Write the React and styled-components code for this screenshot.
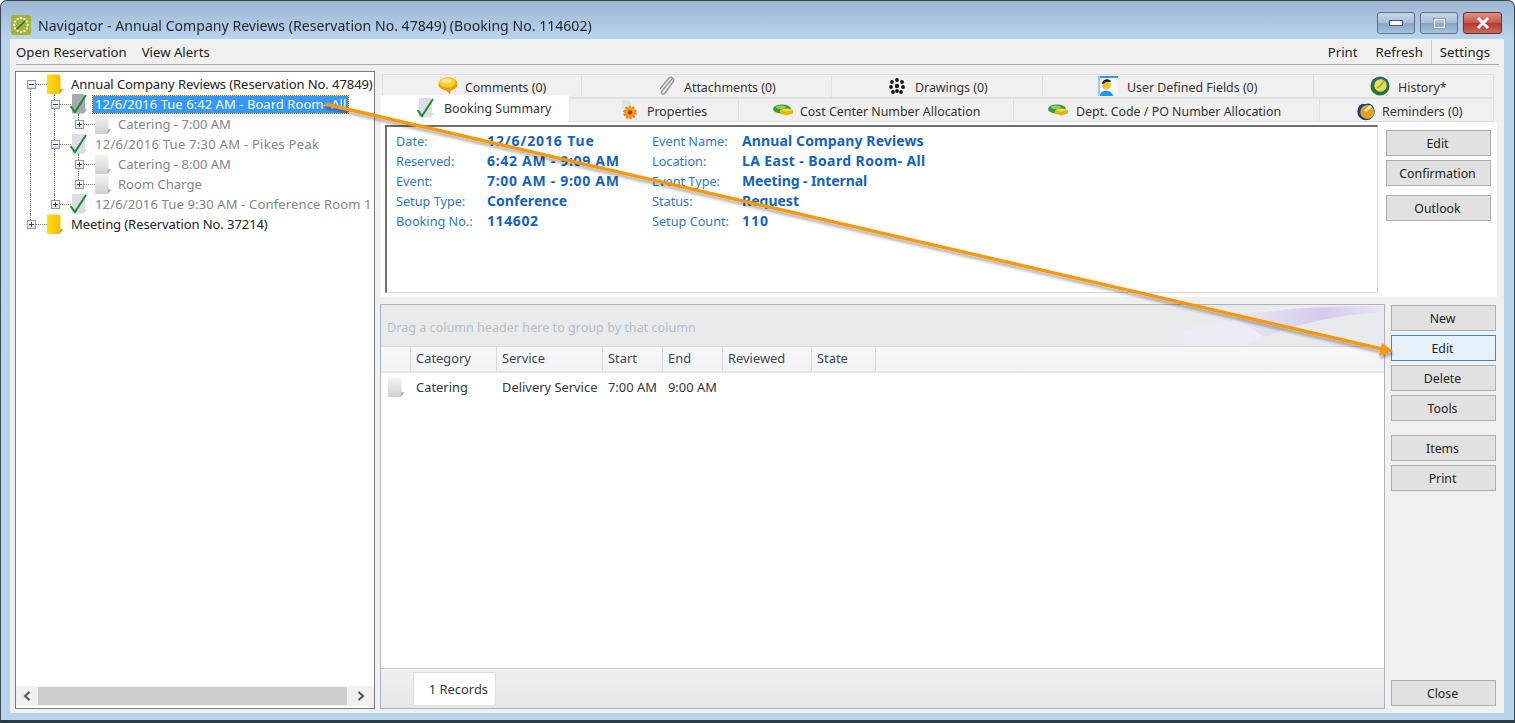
import React from "react";
import styled, { createGlobalStyle, css } from "styled-components";

const Global = createGlobalStyle`
  html, body { margin: 0; padding: 0; background: #fff; overflow: hidden; }
  * { box-sizing: border-box; }
  #root { width: 1515px; height: 723px; }
`;

const Window = styled.div`
  position: relative;
  width: 1515px;
  height: 723px;
  display: flex;
  flex-direction: column;
  padding: 0 10px 7px 9px;
  border-radius: 7px 7px 0 0;
  border: 1px solid #3a4650;
  border-bottom: 3px solid #2c3c44;
  background: linear-gradient(180deg, #9db7d2 0, #b9d4ee 38px, #b8d3ec 100%);
  font-family: "Noto Sans", "Open Sans", sans-serif;
  font-size: 13.2px;
  color: #222;
  filter: blur(0.4px);
`;
const TitleBar = styled.div`
  height: 38px;
  flex: none;
  display: flex;
  align-items: center;
  margin-left: 1px;
  padding-top: 10px;
`;
const TitleText = styled.span`
  margin-left: 7px;
  font-size: 14.1px;
  color: #1c2630;
  white-space: nowrap;
`;
const CaptionGroup = styled.div`
  margin-left: auto;
  margin-right: 2px;
  margin-top: -4px;
  display: flex;
  gap: 5px;
`;
const CaptionButton = styled.div`
  width: ${p => p.$w}px;
  height: 22px;
  display: flex;
  align-items: center;
  justify-content: center;
  border: 1px solid ${p => (p.$close ? "#7a2a22" : "#5f7285")};
  border-radius: 3px;
  background: ${p =>
    p.$close
      ? "linear-gradient(180deg,#dc9088 0,#c9584b 48%,#b23a2e 52%,#c96a5c 100%)"
      : "linear-gradient(180deg,#c5d6e8 0,#a8c0d9 48%,#8aa6c4 52%,#a8c2dc 100%)"};
`;
const Client = styled.div`
  flex: 1;
  min-height: 0;
  display: flex;
  flex-direction: column;
  background: #f0f0f0;
`;
const MenuBar = styled.div`
  height: 26px;
  flex: none;
  margin: 0 5px 0 6px;
  display: flex;
  align-items: center;
  border-bottom: 1px solid #a9a9a9;
`;
const MenuItem = styled.span`
  margin-left: ${p => p.$ml || 0}px;
  white-space: nowrap;
  color: #222;
`;
const MenuEnd = styled.span`
  margin-left: auto;
  white-space: nowrap;
  color: #222;
`;
const MenuDivider = styled.span`
  width: 1px;
  height: 24px;
  background: #c9c9c9;
  margin: 0 8px 0 8px;
`;
const Main = styled.div`
  flex: 1;
  min-height: 0;
  display: flex;
  gap: 5px;
  padding: 6px 5px 4px 5px;
`;
const TreePanel = styled.div`
  width: 360px;
  flex: none;
  display: flex;
  flex-direction: column;
  background: #fff;
  border: 1px solid #7b7b7b;
  padding-bottom: 2px;
`;
const TreeBody = styled.div`
  flex: 1;
  padding: 2px 0 0 3px;
  overflow: hidden;
  font-size: 13.05px;
`;
const TreeRow = styled.div`
  height: 20px;
  display: flex;
  align-items: center;
  white-space: nowrap;
`;
const lineV = css`
  &::before {
    content: "";
    position: absolute;
    left: 11px;
    border-left: 1px dotted #777;
    ${p => (p.$v === "full" ? "top:0;bottom:0;" : "")}
    ${p => (p.$v === "top" ? "top:0;height:10px;" : "")}
    ${p => (p.$v === "bottom" ? "top:10px;bottom:0;" : "")}
    ${p => (!p.$v ? "display:none;" : "")}
  }
`;
const GuideCell = styled.span`
  position: relative;
  width: 24px;
  height: 20px;
  flex: none;
  ${lineV}
`;
const ExpanderCell = styled(GuideCell)`
  display: flex;
  align-items: center;
  justify-content: center;
  &::after {
    content: "";
    position: absolute;
    left: 12px;
    top: 10px;
    width: 16px;
    border-top: 1px dotted #777;
  }
`;
const ExpanderBox = styled.span`
  position: relative;
  z-index: 1;
  width: 9px;
  height: 9px;
  border: 1px solid #8c99a8;
  background: linear-gradient(180deg, #fff, #dfe4ec);
  &::before {
    content: "";
    position: absolute;
    left: 1px;
    right: 1px;
    top: 3px;
    height: 1px;
    background: #27408b;
  }
  ${p =>
    p.$plus &&
    css`
      &::after {
        content: "";
        position: absolute;
        top: 1px;
        bottom: 1px;
        left: 3px;
        width: 1px;
        background: #27408b;
      }
    `}
`;
const IconCell = styled.span`
  position: relative;
  width: 24px;
  height: 20px;
  flex: none;
  display: flex;
  align-items: center;
  justify-content: center;
  z-index: 1;
  svg { position: relative; z-index: 1; }
  ${lineV}
`;
const TreeLabel = styled.span`
  margin-left: ${p => (p.$selected ? 2 : 0)}px;
  padding-left: ${p => (p.$selected ? 2 : p.$level === 2 ? 3 : 4)}px;
  padding-right: ${p => (p.$selected ? 2 : 0)}px;
  height: ${p => (p.$selected ? 17 : 20)}px;
  line-height: ${p => (p.$selected ? 16 : 20)}px;
  letter-spacing: ${p => p.$ls || 0}px;
  background: ${p => (p.$selected ? "#3399ff" : "transparent")};
  outline: ${p => (p.$selected ? "1px dotted #9a5a10" : "none")};
  color: ${p => (p.$selected ? "#fff" : p.$muted ? "#858585" : "#222")};
`;
const ScrollBar = styled.div`
  height: 20px;
  flex: none;
  display: flex;
  align-items: center;
  background: #f0f0f0;
`;
const ScrollArrow = styled.div`
  width: ${p => p.$w}px;
  height: 20px;
  flex: none;
  display: flex;
  align-items: center;
  justify-content: center;
`;
const ScrollThumb = styled.div`
  flex: 1;
  height: 18px;
  background: #cdcdcd;
`;
const RightColumn = styled.div`
  flex: 1;
  min-width: 0;
  display: flex;
  flex-direction: column;
`;
const Tabs = styled.div`
  margin-left: 1px;
  padding-top: 3px;
  display: flex;
  flex-direction: column;
`;
const TabRow = styled.div`
  height: 24px;
  display: flex;
  align-items: flex-end;
  padding-left: ${p => p.$pl || 0}px;
`;
const Tab = styled.div`
  width: ${p => p.$w}px;
  height: 24px;
  flex: none;
  display: flex;
  align-items: center;
  gap: ${p => p.$gap || 7}px;
  padding-left: ${p => p.$pl}px;
  white-space: nowrap;
  font-size: 12.4px;
  color: #333;
  background: #f0f0f0;
  border: 1px solid #dfdfdf;
  border-left-width: ${p => (p.$first ? 1 : 0)}px;
  span { padding-top: 2px; }
`;
const ActiveTab = styled(Tab)`
  position: relative;
  z-index: 1;
  height: 27px;
  margin-top: -3px;
  background: #fff;
  border: 0;
  padding-bottom: 1px;
  span { padding-top: 0; }
`;
const TabPage = styled.div`
  height: 175px;
  width: 1116px;
  display: flex;
  background: #fff;
  padding: 3px 0 4px 4px;
`;
const SummaryBox = styled.div`
  width: 993px;
  border-top: 2px solid #6f6f6f;
  border-left: 2px solid #6f6f6f;
  border-right: 1px solid #d9d9d9;
  border-bottom: 1px solid #d9d9d9;
  padding: 4px 0 0 9px;
  display: grid;
  grid-template-columns: 91px 165px 90px 1fr;
  grid-auto-rows: 20px;
  align-items: center;
`;
const FieldLabel = styled.span`
  color: #2f78cc;
  font-size: 12.7px;
  white-space: nowrap;
`;
const FieldValue = styled.span`
  color: #1463bd;
  font-weight: 700;
  font-size: 14px;
  letter-spacing: ${p => p.$ls || 0}px;
  padding-bottom: 2px;
  white-space: nowrap;
`;
const ButtonStack = styled.div`
  display: flex;
  flex-direction: column;
  width: 105px;
  flex: none;
`;
const PageButtons = styled(ButtonStack)`
  margin-left: 8px;
  padding-top: 5px;
`;
const Btn = styled.div`
  width: 105px;
  height: 26px;
  flex: none;
  margin-top: ${p => p.$mt || 0}px;
  padding-right: 2px;
  display: flex;
  align-items: center;
  justify-content: center;
  font-size: 12.3px;
  background: ${p => (p.$focus ? "#e5f1fb" : "#e1e1e1")};
  border: 1px solid ${p => (p.$focus ? "#2f8bdc" : "#adadad")};
  color: #222;
`;
const Lower = styled.div`
  flex: 1;
  min-height: 0;
  margin-top: 7px;
  display: flex;
  gap: 6px;
`;
const GridPanel = styled.div`
  width: 1005px;
  flex: none;
  display: flex;
  flex-direction: column;
  background: #fff;
  border: 1px solid #aeb3b9;
  font-size: 12.9px;
`;
const GroupPanel = styled.div`
  height: 41px;
  flex: none;
  display: flex;
  align-items: center;
  justify-content: space-between;
  background: #e9eaee;
  color: #b9bcc2;
  padding-left: 6px;
  font-size: 12.6px;
  overflow: hidden;
  span { padding-top: 3px; }
`;
const HeaderRow = styled.div`
  height: 27px;
  flex: none;
  display: flex;
  background: linear-gradient(180deg, #f7f8f9, #f1f2f4);
  border-top: 1px solid #d5d8dd;
  border-bottom: 2px solid #e3e4e8;
`;
const HeaderCell = styled.div`
  width: ${p => p.$w}px;
  flex: none;
  display: flex;
  align-items: center;
  padding: 0 0 2px 5px;
  color: #44484e;
  border-right: 1px solid #d5d8dd;
`;
const DataRow = styled.div`
  height: 28px;
  display: flex;
  align-items: center;
`;
const DataIcon = styled.div`
  width: 30px;
  flex: none;
  padding-left: 7px;
  display: flex;
  align-items: center;
`;
const DataCell = styled.div`
  width: ${p => p.$w}px;
  flex: none;
  padding-left: 5px;
  color: #33373c;
  white-space: nowrap;
`;
const GridSpace = styled.div`
  flex: 1;
`;
const GridFooter = styled.div`
  height: 40px;
  flex: none;
  padding: 3px 0 2px 32px;
  background: linear-gradient(180deg, #f0f0f2, #e6e7ea);
  border-top: 1px solid #c3c6cb;
`;
const RecordsTab = styled.div`
  width: 83px;
  height: 34px;
  display: flex;
  align-items: center;
  justify-content: flex-end;
  padding-right: 7px;
  background: #fff;
  border: 1px solid #dcdde0;
  color: #33373c;
  white-space: nowrap;
`;
const SideButtons = styled(ButtonStack)`
  padding: 1px 0 3px;
`;
const CloseBtn = styled(Btn)`
  margin-top: auto;
`;
const ArrowOverlay = styled.svg`
  position: absolute;
  left: -1px;
  top: -1px;
  width: 1515px;
  height: 723px;
  pointer-events: none;
  z-index: 5;
`;

const AppLogo = () => (
  <svg width="20" height="20" viewBox="0 0 20 20">
    <rect width="20" height="20" rx="2.5" fill="#a6b42c" />
    {Array.from({ length: 12 }, (_, i) => i * 30).map(a => (
      <circle key={a} cx={10 + 6.8 * Math.cos((a * Math.PI) / 180)} cy={10 + 6.8 * Math.sin((a * Math.PI) / 180)} r="1.15" fill="#fff" />
    ))}
    <path d="M5.5 14 L9 11 L14 6" stroke="#1f5a88" strokeWidth="1.5" fill="none" />
  </svg>
);
const FolderIcon = () => (
  <svg width="16" height="20" viewBox="0 0 16 20">
    <defs>
      <linearGradient id="fy" x1="0" x2="1" y1="0" y2="0">
        <stop offset="0" stopColor="#ffdc14" />
        <stop offset="1" stopColor="#f5b800" />
      </linearGradient>
    </defs>
    <path d="M0 0.5 H12 L13.5 2 V15 H16 L12.5 20 H0 Z" fill="url(#fy)" />
    <path d="M12.5 20 L13 15.5 H16 Z" fill="#c9a227" />
  </svg>
);
const DocIcon = () => (
  <svg width="16" height="20" viewBox="0 0 16 20">
    <defs>
      <linearGradient id="dg" x1="0" x2="0" y1="0" y2="1">
        <stop offset="0" stopColor="#f5f5f5" />
        <stop offset="1" stopColor="#cfcfcf" />
      </linearGradient>
    </defs>
    <path d="M0 0.5 H12 L13.5 2 V15 H16 L12.5 20 H0 Z" fill="url(#dg)" />
    <path d="M12.5 20 L13 15.5 H16 Z" fill="#a8a8a8" />
  </svg>
);
const CheckDocIcon = ({ shade = "#dcdce4" }) => (
  <svg width="18" height="20" viewBox="0 0 18 20">
    <path d="M2 0 H13 L15 2 V15 H17 L14 19.5 H2 Z" fill={shade} />
    <path d="M0.5 12 L5 18 L16 1" stroke="#1e8a2e" strokeWidth="2" fill="none" />
  </svg>
);
const BubbleIcon = () => (
  <svg width="20" height="18" viewBox="0 0 20 18">
    <ellipse cx="10" cy="7" rx="9.7" ry="6.8" fill="#e8a000" />
    <path d="M7 12 L12 17.5 L13 12 Z" fill="#e29a00" />
    <ellipse cx="9.5" cy="5.6" rx="8.2" ry="4.8" fill="#f8cf2e" />
    <ellipse cx="8.5" cy="3.8" rx="5" ry="2.2" fill="#fdea8c" />
  </svg>
);
const ClipIcon = () => (
  <svg width="18" height="20" viewBox="0 0 18 20">
    <path d="M15 3 L5 15 C3 18 7 19 8 17 L16 6 C18 3 14 0 12 2 L3 13" stroke="#9a9a9a" strokeWidth="1.6" fill="none" />
  </svg>
);
const DotsIcon = () => (
  <svg width="16" height="16" viewBox="0 0 16 16" fill="#161616">
    {[[8, 2], [3, 4], [13, 4], [2, 9], [14, 9], [4, 14], [12, 14], [8, 13]].map(([x, y]) => (
      <circle key={`${x}-${y}`} cx={x} cy={y} r="1.9" />
    ))}
    <circle cx="8" cy="8" r="2.2" />
  </svg>
);
const UserIcon = () => (
  <svg width="20" height="20" viewBox="0 0 20 20">
    <rect x="0" y="0" width="20" height="20" fill="#f2f8fd" />
    <rect x="0" y="0" width="20" height="2" fill="#2a9be6" />
    <rect x="0" y="0" width="2" height="20" fill="#8fcbf2" />
    <path d="M2 20 C2 13 14 13 15 20 Z" fill="#1f9ae8" />
    <circle cx="8.5" cy="9" r="4.5" fill="#f2c22e" />
    <path d="M4 8 C4 2 13 2 13 6 L8 6 C7 7 6 8 4 8 Z" fill="#2c1a12" />
  </svg>
);
const ClockIcon = () => (
  <svg width="20" height="20" viewBox="0 0 20 20">
    <circle cx="10" cy="10" r="9.5" fill="#2e6f3a" />
    <path d="M3 5 A9 9 0 0 1 18 6 L15 8 A6 6 0 0 0 5 7 Z" fill="#3b5c9a" />
    <circle cx="10.5" cy="9.5" r="6.2" fill="#e3e05a" />
    <path d="M10.5 9.5 L14 5 M10.5 9.5 L7 12" stroke="#8fae2a" strokeWidth="1.4" />
  </svg>
);
const GearDocIcon = () => (
  <svg width="19" height="20" viewBox="0 0 19 20">
    <path d="M2 0 H9 L11 3 V9 H2 Z" fill="#e2e2e2" />
    <circle cx="10" cy="12.5" r="5.6" fill="#eda51a" stroke="#d98a14" strokeDasharray="2 1.5" strokeWidth="2.4" />
    <circle cx="10" cy="12.5" r="2.2" fill="#c9301b" />
  </svg>
);
const MoneyIcon = () => (
  <svg width="20" height="12" viewBox="0 0 20 12">
    <ellipse cx="9" cy="5" rx="9" ry="4.6" fill="#3f9a34" />
    <ellipse cx="8" cy="3.2" rx="5" ry="1.8" fill="#8fcc6a" />
    <path d="M7 6 L14 4.5 L20 6 V9.5 L13 11.5 L7 9.5 Z" fill="#e3b60c" />
    <path d="M7 6 L14 4.5 L20 6 L13 7.6 Z" fill="#f8df4a" />
  </svg>
);
const ReminderIcon = () => (
  <svg width="18" height="21" viewBox="0 0 18 21">
    <circle cx="9" cy="11.5" r="8.7" fill="#1f3f8e" />
    <path d="M3 4 C6 1 11 1 14 3 L9 4 Z" fill="#dfe7f3" />
    <circle cx="10.3" cy="12" r="7" fill="#e3a31f" />
    <path d="M8 11 L14 6" stroke="#fbeeb8" strokeWidth="2.4" />
  </svg>
);
const Chevron = ({ left }) => (
  <svg width="8" height="10" viewBox="0 0 8 10">
    <path d={left ? "M6.5 1 L2 5 L6.5 9" : "M1.5 1 L6 5 L1.5 9"} stroke="#505050" strokeWidth="2" fill="none" />
  </svg>
);

const treeRows = [
  { cells: [], exp: "minus", v: "bottom", icon: "folder", ls: -0.1, text: "Annual Company Reviews (Reservation No. 47849)" },
  { cells: ["full"], exp: "minus", v: "full", icon: "checkDim", drop: true, ls: 0.03, text: "12/6/2016 Tue 6:42 AM - Board Room- All", selected: true },
  { cells: ["full", "full"], exp: "plus", v: "top", icon: "doc", text: "Catering - 7:00 AM", muted: true, level: 2 },
  { cells: ["full"], exp: "minus", v: "full", icon: "check", drop: true, ls: 0.24, text: "12/6/2016 Tue 7:30 AM - Pikes Peak", muted: true },
  { cells: ["full", "full"], exp: "plus", v: "full", icon: "doc", text: "Catering - 8:00 AM", muted: true, level: 2 },
  { cells: ["full", "full"], exp: "plus", v: "top", icon: "doc", text: "Room Charge", muted: true, level: 2 },
  { cells: ["full"], exp: "plus", v: "top", icon: "check", ls: 0.12, text: "12/6/2016 Tue 9:30 AM - Conference Room 1", muted: true },
  { cells: [], exp: "plus", v: "top", icon: "folder", ls: -0.1, text: "Meeting (Reservation No. 37214)" },
];
const treeIcons = {
  folder: <FolderIcon />,
  check: <CheckDocIcon />,
  checkDim: <CheckDocIcon shade="#a9a9b4" />,
  doc: <DocIcon />,
};

const topTabs = [
  { w: 200, pl: 55, icon: <BubbleIcon />, text: "Comments (0)" },
  { w: 250, pl: 75, gap: 9, icon: <ClipIcon />, text: "Attachments (0)" },
  { w: 211, pl: 57, gap: 10, icon: <DotsIcon />, text: "Drawings (0)" },
  { w: 271, pl: 55, gap: 9, icon: <UserIcon />, text: "User Defined Fields (0)" },
  { w: 180, pl: 56, gap: 8, icon: <ClockIcon />, text: "History*" },
];
const bottomTabs = [
  { w: 170, pl: 51, gap: 8, icon: <GearDocIcon />, text: "Properties" },
  { w: 275, pl: 34, icon: <MoneyIcon />, text: "Cost Center Number Allocation" },
  { w: 306, pl: 34, gap: 8, icon: <MoneyIcon />, text: "Dept. Code / PO Number Allocation" },
  { w: 174, pl: 37, icon: <ReminderIcon />, text: "Reminders (0)" },
];
const fields = [
  { a: "Date:", b: "12/6/2016 Tue", bs: 0.9, c: "Event Name:", d: "Annual Company Reviews", ds: 0.12 },
  { a: "Reserved:", b: "6:42 AM - 9:09 AM", bs: 0.7, c: "Location:", d: "LA East - Board Room- All", ds: 0.4 },
  { a: "Event:", b: "7:00 AM - 9:00 AM", bs: 0.7, c: "Event Type:", d: "Meeting - Internal", ds: -0.1 },
  { a: "Setup Type:", b: "Conference", bs: 0.05, c: "Status:", d: "Request", ds: 0 },
  { a: "Booking No.:", b: "114602", bs: 0.6, c: "Setup Count:", d: "110", ds: 1 },
];
const columns = [
  { w: 30, t: "" },
  { w: 86, t: "Category" },
  { w: 106, t: "Service" },
  { w: 60, t: "Start" },
  { w: 60, t: "End" },
  { w: 89, t: "Reviewed" },
  { w: 64, t: "State" },
];
const rowCells = [
  { w: 86, t: "Catering" },
  { w: 106, t: "Delivery Service" },
  { w: 60, t: "7:00 AM" },
  { w: 60, t: "9:00 AM" },
];

export default function App() {
  return (
    <>
      <Global />
      <Window>
        <TitleBar>
          <AppLogo />
          <TitleText>Navigator - Annual Company Reviews (Reservation No. 47849) (Booking No. 114602)</TitleText>
          <CaptionGroup>
            <CaptionButton $w={38}>
              <svg width="14" height="6" viewBox="0 0 14 6"><rect x=".5" y=".5" width="13" height="5" fill="#f4f7fa" stroke="#4b5d70" /></svg>
            </CaptionButton>
            <CaptionButton $w={38}>
              <svg width="13" height="11" viewBox="0 0 13 11"><rect x="1" y="1" width="11" height="9" fill="none" stroke="#f4f7fa" strokeWidth="2" /><rect x=".5" y=".5" width="12" height="10" fill="none" stroke="#4b5d70" strokeWidth=".6" /></svg>
            </CaptionButton>
            <CaptionButton $w={39} $close>
              <svg width="14" height="12" viewBox="0 0 14 12"><path d="M2 1 L12 11 M12 1 L2 11" stroke="#fff" strokeWidth="3" /></svg>
            </CaptionButton>
          </CaptionGroup>
        </TitleBar>
        <Client>
          <MenuBar>
            <MenuItem>Open Reservation</MenuItem>
            <MenuItem $ml={15}>View Alerts</MenuItem>
            <MenuEnd>Print</MenuEnd>
            <MenuItem $ml={18}>Refresh</MenuItem>
            <MenuDivider />
            <MenuItem>Settings</MenuItem>
            <MenuItem $ml={9} />
          </MenuBar>
          <Main>
            <TreePanel>
              <TreeBody>
                {treeRows.map(r => (
                  <TreeRow key={r.text}>
                    {r.cells.map((c, i) => (
                      <GuideCell key={i} $v={c} />
                    ))}
                    <ExpanderCell $v={r.v}>
                      <ExpanderBox $plus={r.exp === "plus"} />
                    </ExpanderCell>
                    <IconCell $v={r.drop ? "bottom" : undefined}>{treeIcons[r.icon]}</IconCell>
                    <TreeLabel $selected={r.selected} $muted={r.muted} $level={r.level} $ls={r.ls}>{r.text}</TreeLabel>
                  </TreeRow>
                ))}
              </TreeBody>
              <ScrollBar>
                <ScrollArrow $w={22}><Chevron left /></ScrollArrow>
                <ScrollThumb />
                <ScrollArrow $w={27}><Chevron /></ScrollArrow>
              </ScrollBar>
            </TreePanel>
            <RightColumn>
              <Tabs>
                <TabRow $pl={1}>
                  {topTabs.map((t, i) => (
                    <Tab key={t.text} $w={t.w} $pl={t.pl} $gap={t.gap} $first={i === 0}>
                      {t.icon}
                      <span>{t.text}</span>
                    </Tab>
                  ))}
                </TabRow>
                <TabRow>
                  <ActiveTab $w={188} $pl={36} $gap={9}>
                    <CheckDocIcon />
                    <span>Booking Summary</span>
                  </ActiveTab>
                  {bottomTabs.map(t => (
                    <Tab key={t.text} $w={t.w} $pl={t.pl} $gap={t.gap}>
                      {t.icon}
                      <span>{t.text}</span>
                    </Tab>
                  ))}
                </TabRow>
                <TabPage>
                  <SummaryBox>
                    {fields.flatMap(f => [
                      <FieldLabel key={f.a}>{f.a}</FieldLabel>,
                      <FieldValue key={f.b + f.a} $ls={f.bs}>{f.b}</FieldValue>,
                      <FieldLabel key={f.c}>{f.c}</FieldLabel>,
                      <FieldValue key={f.d} $ls={f.ds}>{f.d}</FieldValue>,
                    ])}
                  </SummaryBox>
                  <PageButtons>
                    <Btn>Edit</Btn>
                    <Btn $mt={4}>Confirmation</Btn>
                    <Btn $mt={9}>Outlook</Btn>
                  </PageButtons>
                </TabPage>
              </Tabs>
              <Lower>
                <GridPanel>
                  <GroupPanel>
                    <span>Drag a column header here to group by that column</span>
                    <svg width="200" height="41" viewBox="0 0 200 41">
                      <defs>
                        <linearGradient id="wv" x1="0" x2="1" y1="0" y2="0">
                          <stop offset="0" stopColor="#dcd6ef" stopOpacity=".3" />
                          <stop offset=".6" stopColor="#d5c8ec" stopOpacity=".95" />
                          <stop offset="1" stopColor="#e6e0f0" stopOpacity=".7" />
                        </linearGradient>
                      </defs>
                      <path d="M0 25 C50 12 90 2 130 0 H200 V3 C140 8 80 30 60 41 H0 Z" fill="#eeecf5" opacity=".8" />
                      <path d="M50 12 C90 4 130 1 200 1 V7 C150 10 110 20 80 32 Z" fill="url(#wv)" />
                    </svg>
                  </GroupPanel>
                  <HeaderRow>
                    {columns.map(c => (
                      <HeaderCell key={c.w + c.t} $w={c.w}>{c.t}</HeaderCell>
                    ))}
                  </HeaderRow>
                  <DataRow>
                    <DataIcon><DocIcon /></DataIcon>
                    {rowCells.map(c => (
                      <DataCell key={c.t} $w={c.w}>{c.t}</DataCell>
                    ))}
                  </DataRow>
                  <GridSpace />
                  <GridFooter>
                    <RecordsTab>1 Records</RecordsTab>
                  </GridFooter>
                </GridPanel>
                <SideButtons>
                  <Btn>New</Btn>
                  <Btn $mt={4} $focus>Edit</Btn>
                  <Btn $mt={4}>Delete</Btn>
                  <Btn $mt={4}>Tools</Btn>
                  <Btn $mt={14}>Items</Btn>
                  <Btn $mt={4}>Print</Btn>
                  <CloseBtn>Close</CloseBtn>
                </SideButtons>
              </Lower>
            </RightColumn>
          </Main>
        </Client>
        <ArrowOverlay viewBox="0 0 1515 723">
          <defs>
            <filter id="as" x="-5%" y="-20%" width="110%" height="140%">
              <feDropShadow dx="1" dy="3" stdDeviation="1.6" floodColor="#000" floodOpacity=".32" />
            </filter>
          </defs>
          <g filter="url(#as)">
            <path d="M325 104 L1382 349" stroke="#f7980f" strokeWidth="3.4" fill="none" />
            <path d="M1393 351 L1379 356 L1382 343 Z" fill="#f7980f" />
          </g>
        </ArrowOverlay>
      </Window>
    </>
  );
}
